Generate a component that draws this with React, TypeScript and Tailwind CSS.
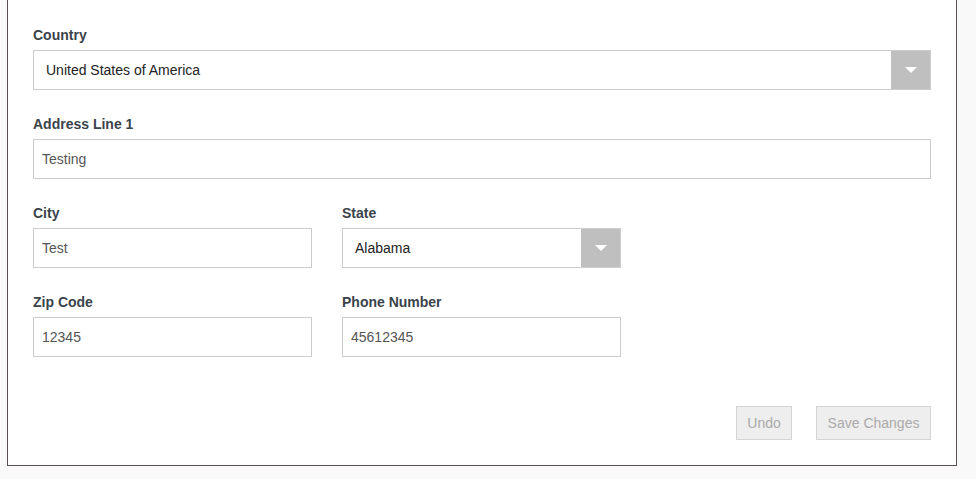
import React from "react";

const font = { fontFamily: '"Liberation Sans", Arial, sans-serif' };

function Label({ children }: { children: React.ReactNode }) {
  return (
    <div className="h-[20px] mb-[5px] text-[14px] leading-[20px] font-bold text-[#3a434b]">
      {children}
    </div>
  );
}

function TextInput({ value, className = "" }: { value: string; className?: string }) {
  return (
    <div
      className={
        "h-[40px] border border-[#cccccc] bg-white flex items-center pl-[8px] text-[14px] text-[#555555] " +
        className
      }
    >
      {value}
    </div>
  );
}

function Select({ value, className = "" }: { value: string; className?: string }) {
  return (
    <div className={"h-[40px] border border-[#cccccc] bg-white flex items-stretch " + className}>
      <div className="flex-1 flex items-center pl-[12px] text-[14px] text-[#222222]">{value}</div>
      <div className="w-[39px] bg-[#bfbfbf] flex items-center justify-center">
        <div className="w-0 h-0 border-l-[6px] border-r-[6px] border-t-[6px] border-l-transparent border-r-transparent border-t-white" />
      </div>
    </div>
  );
}

export default function App() {
  return (
    <div className="w-[976px] h-[479px] bg-[#f9f9f9] overflow-hidden" style={font}>
      <div className="ml-[7px] w-[950px] h-[466px] bg-white border-l border-r border-b border-[#5a5054] pl-[25px] pr-[25px] pt-[25px]">
        <div className="mb-[24px]">
          <Label>Country</Label>
          <Select value="United States of America" />
        </div>
        <div className="mb-[24px]">
          <Label>Address Line 1</Label>
          <TextInput value="Testing" />
        </div>
        <div className="flex gap-[30px] mb-[24px]">
          <div className="w-[279px]">
            <Label>City</Label>
            <TextInput value="Test" />
          </div>
          <div className="w-[279px]">
            <Label>State</Label>
            <Select value="Alabama" />
          </div>
        </div>
        <div className="flex gap-[30px]">
          <div className="w-[279px]">
            <Label>Zip Code</Label>
            <TextInput value="12345" />
          </div>
          <div className="w-[279px]">
            <Label>Phone Number</Label>
            <TextInput value="45612345" />
          </div>
        </div>
        <div className="flex justify-end gap-[24px] mt-[49px]">
          <button className="h-[34px] w-[56px] bg-[#eeeeee] border border-[#d4d4d4] text-[14px] text-[#aaaaaa]">
            Undo
          </button>
          <button className="h-[34px] w-[115px] bg-[#eeeeee] border border-[#d4d4d4] text-[14px] text-[#aaaaaa]">
            Save Changes
          </button>
        </div>
      </div>
    </div>
  );
}
